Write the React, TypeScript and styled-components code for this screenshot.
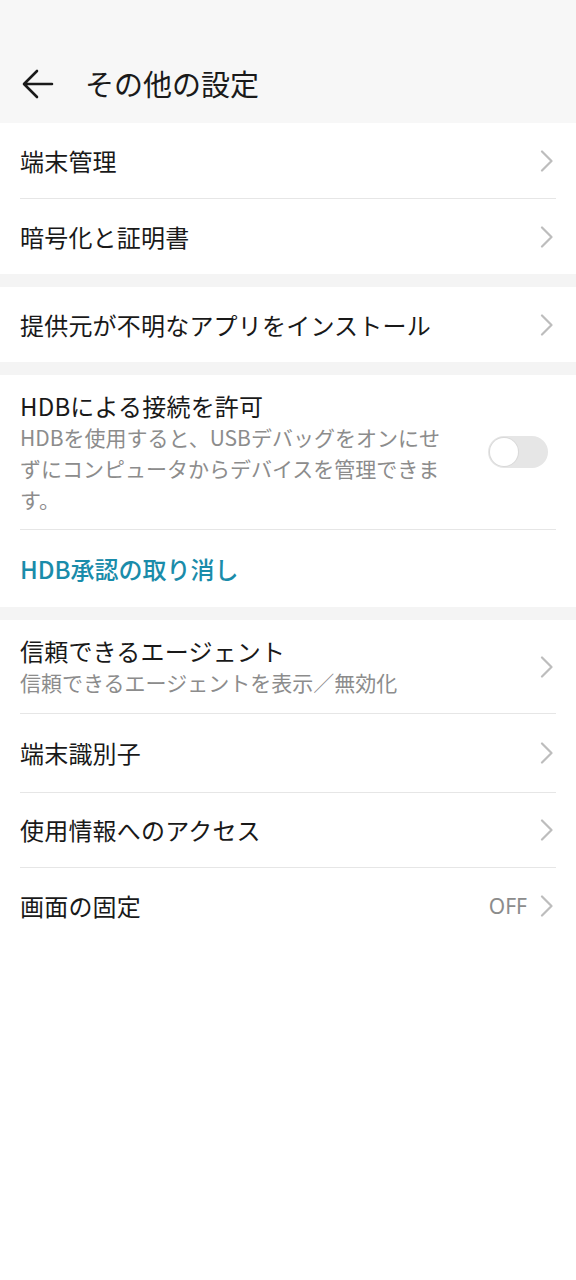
import React from "react";
import styled, { createGlobalStyle } from "styled-components";

const GlobalStyle = createGlobalStyle`
  html, body {
    margin: 0;
    padding: 0;
    background: #ffffff;
  }
  body {
    font-family: "Noto Sans CJK JP", "Noto Sans", sans-serif;
    color: #191919;
  }
`;

const Page = styled.div`
  width: 576px;
  min-height: 1280px;
  background: #ffffff;
`;

const Header = styled.header`
  height: 123px;
  box-sizing: border-box;
  padding-top: 44px;
  background: #f7f7f7;
  display: flex;
  align-items: center;
`;

const BackButton = styled.button`
  width: 40px;
  height: 40px;
  margin-left: 18px;
  padding: 0;
  border: none;
  background: transparent;
  display: flex;
  align-items: center;
  justify-content: center;
`;

const Title = styled.h1`
  margin: 0 0 0 27px;
  font-size: 29px;
  font-weight: 400;
  line-height: 1;
  color: #1a1a1a;
`;

const Section = styled.section<{ $last?: boolean }>`
  background: #ffffff;
  border-bottom: ${(p) => (p.$last ? "none" : "13px solid #f4f4f4")};
`;

const Row = styled.div<{ $h?: number }>`
  min-height: ${(p) => p.$h ?? 75}px;
  box-sizing: border-box;
  padding: 0 22px 0 20px;
  display: flex;
  align-items: center;
  gap: 12px;
`;

const Divider = styled.div`
  height: 1px;
  margin: 0 20px;
  background: #e6e6e6;
`;

const TextCol = styled.div<{ $w?: number }>`
  flex: ${(p) => (p.$w ? "none" : "1")};
  width: ${(p) => (p.$w ? `${p.$w}px` : "auto")};
  display: flex;
  flex-direction: column;
`;

const Label = styled.div`
  font-size: 24px;
  line-height: 32px;
  letter-spacing: 0.2px;
  color: #191919;
`;

const Sub = styled.div`
  font-size: 21px;
  line-height: 31px;
  color: #8c8c8c;
`;

const LinkLabel = styled.div`
  font-size: 24px;
  line-height: 32px;
  font-weight: 500;
  color: #1a8caa;
`;

const Value = styled.span`
  font-family: "Noto Sans", sans-serif;
  font-size: 21px;
  color: #8c8c8c;
  margin-right: 1px;
`;

const Spacer = styled.div`
  flex: 1;
`;

const Track = styled.div`
  width: 60px;
  height: 32px;
  margin-right: 6px;
  border-radius: 16px;
  background: #e6e6e6;
  box-sizing: border-box;
  padding: 2px;
  display: flex;
  align-items: center;
`;

const Knob = styled.div`
  width: 28px;
  height: 28px;
  border-radius: 50%;
  background: #ffffff;
  box-shadow: 0 0 0 1px #d9d9d9;
`;

const Chevron = () => (
  <svg width="14" height="22" viewBox="0 0 14 22" fill="none">
    <path d="M2 1.5 L11.5 11 L2 20.5" stroke="#bdbdbd" strokeWidth="2.2" strokeLinecap="round" strokeLinejoin="round" />
  </svg>
);

const BackArrow = () => (
  <svg width="34" height="34" viewBox="0 0 34 34" fill="none">
    <path d="M31 17 H4 M16 4 L3 17 L16 30" stroke="#1a1a1a" strokeWidth="2.6" strokeLinecap="round" strokeLinejoin="round" />
  </svg>
);

type NavRowProps = {
  label: string;
  sub?: string;
  value?: string;
  h?: number;
};

const NavRow: React.FC<NavRowProps> = ({ label, sub, value, h }) => (
  <Row $h={h}>
    <TextCol>
      <Label>{label}</Label>
      {sub && <Sub>{sub}</Sub>}
    </TextCol>
    {value && <Value>{value}</Value>}
    <Chevron />
  </Row>
);

const App: React.FC = () => {
  return (
    <Page>
      <GlobalStyle />
      <Header>
        <BackButton aria-label="戻る">
          <BackArrow />
        </BackButton>
        <Title>その他の設定</Title>
      </Header>

      <Section>
        <NavRow label="端末管理" />
        <Divider />
        <NavRow label="暗号化と証明書" />
      </Section>

      <Section>
        <NavRow label="提供元が不明なアプリをインストール" />
      </Section>

      <Section>
        <Row $h={154}>
          <TextCol $w={428}>
            <Label>HDBによる接続を許可</Label>
            <Sub>HDBを使用すると、USBデバッグをオンにせずにコンピュータからデバイスを管理できます。</Sub>
          </TextCol>
          <Spacer />
          <Track>
            <Knob />
          </Track>
        </Row>
        <Divider />
        <Row $h={77}>
          <LinkLabel>HDB承認の取り消し</LinkLabel>
        </Row>
      </Section>

      <Section $last>
        <NavRow label="信頼できるエージェント" sub="信頼できるエージェントを表示／無効化" h={93} />
        <Divider />
        <NavRow label="端末識別子" h={78} />
        <Divider />
        <NavRow label="使用情報へのアクセス" h={74} />
        <Divider />
        <NavRow label="画面の固定" value="OFF" h={76} />
      </Section>
    </Page>
  );
};

export default App;
